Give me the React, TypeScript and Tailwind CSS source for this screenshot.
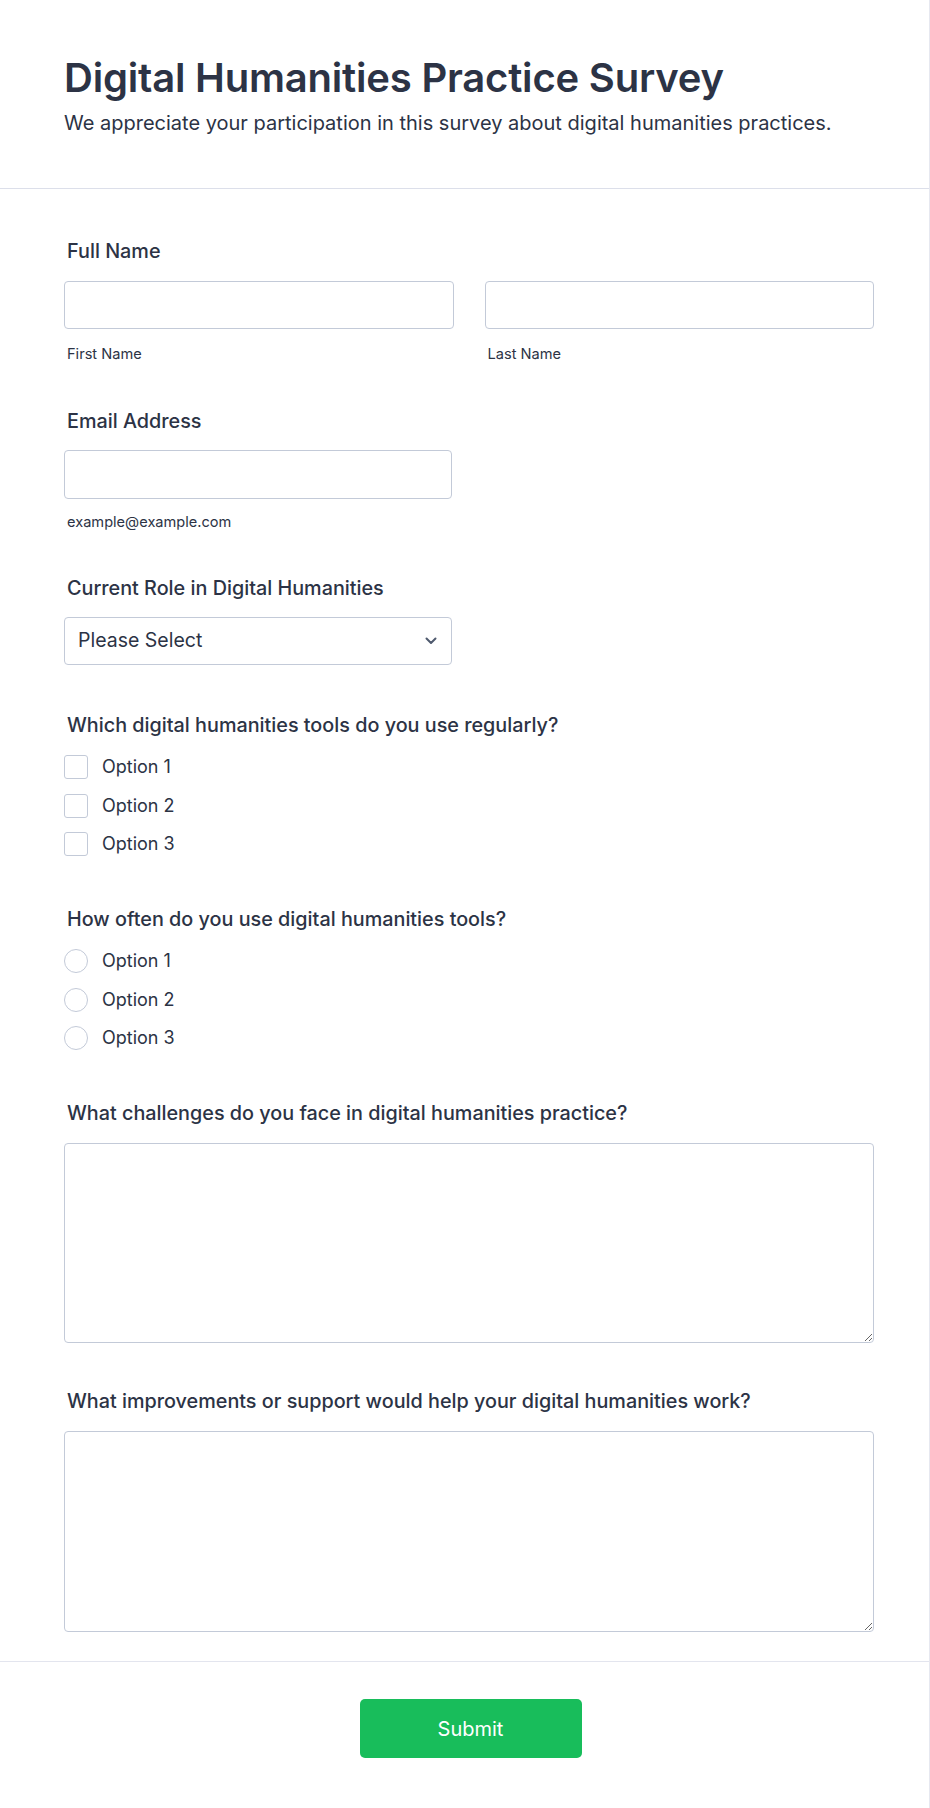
import React, { useState } from 'react';

const FONT = { fontFamily: 'Inter, "Noto Sans", "Liberation Sans", sans-serif' };

const Label: React.FC<{ children: React.ReactNode; className?: string }> = ({ children, className = '' }) => (
  <div className={`text-[19.8px] leading-7 font-medium text-[#2c3345] ${className}`}>{children}</div>
);

const SubLabel: React.FC<{ children: React.ReactNode }> = ({ children }) => (
  <div className="mt-[15px] text-[14.6px] leading-5 text-[#2c3345] pl-[3px]">{children}</div>
);

const App: React.FC = () => {
  const [checked, setChecked] = useState<number[]>([]);
  const [freq, setFreq] = useState<number | null>(null);
  const options = ['Option 1', 'Option 2', 'Option 3'];

  const toggle = (i: number) =>
    setChecked(c => (c.includes(i) ? c.filter(x => x !== i) : [...c, i]));

  return (
    <div style={FONT} className="w-full min-h-[1808px] bg-white text-[#2c3345] border-r border-[#e6e8f0]">
      {/* Header */}
      <div className="pl-16 pr-[55px] pt-[55px] pb-[51px] border-b border-[#dcdfea]">
        <h1 className="text-[40px] leading-[46px] font-semibold tracking-[-0.2px] text-[#2c3345]">
          Digital Humanities Practice Survey
        </h1>
        <p className="mt-[8px] text-xl leading-7 text-[#2c3345]">
          We appreciate your participation in this survey about digital humanities practices.
        </p>
      </div>

      {/* Fields */}
      <div className="pl-16 pr-[55px] pt-12 pb-[29px]">
        {/* Full name */}
        <div>
          <Label className="pl-[3px] mb-[16px]">Full Name</Label>
          <div className="grid grid-cols-2 gap-[31px]">
            <div>
              <input className="w-full h-12 rounded border border-[#c3cad8] bg-white px-3 outline-none" />
              <SubLabel>First Name</SubLabel>
            </div>
            <div>
              <input className="w-full h-12 rounded border border-[#c3cad8] bg-white px-3 outline-none" />
              <SubLabel>Last Name</SubLabel>
            </div>
          </div>
        </div>

        {/* Email */}
        <div className="mt-[43px]">
          <Label className="pl-[3px] mb-[15px]">Email Address</Label>
          <input className="w-[388px] h-[49px] rounded border border-[#c3cad8] bg-white px-3 outline-none" />
          <div className="mt-[13px] text-[14.6px] leading-5 text-[#2c3345] pl-[3px]">example@example.com</div>
        </div>

        {/* Role */}
        <div className="mt-[42px]">
          <Label className="pl-[3px] mb-[15px]">Current Role in Digital Humanities</Label>
          <div className="w-[388px] h-12 rounded border border-[#c3cad8] bg-white pl-[13px] pr-[14px] flex items-center justify-between">
            <span className="text-[19.5px] text-[#2c3345]">Please Select</span>
            <svg width="12" height="8" viewBox="0 0 12 8" fill="none">
              <path d="M1.5 1.5 6 6l4.5-4.5" stroke="#4f5a6e" strokeWidth="2" strokeLinecap="round" strokeLinejoin="round" />
            </svg>
          </div>
        </div>

        {/* Checkboxes */}
        <div className="mt-[46px]">
          <Label className="pl-[3px] mb-[16px]">Which digital humanities tools do you use regularly?</Label>
          <div className="flex flex-col gap-[14.5px]">
            {options.map((o, i) => (
              <label key={o} className="flex items-center h-6 gap-[14px] cursor-pointer" onClick={() => toggle(i)}>
                <span
                  className={`w-6 h-6 rounded-[3px] border ${checked.includes(i) ? 'border-[#18bd5b] bg-[#18bd5b]' : 'border-[#c3cad8] bg-white'}`}
                />
                <span className="text-lg leading-6 text-[#2c3345]">{o}</span>
              </label>
            ))}
          </div>
        </div>

        {/* Radios */}
        <div className="mt-[49px]">
          <Label className="pl-[3px] mb-[16px]">How often do you use digital humanities tools?</Label>
          <div className="flex flex-col gap-[14.5px]">
            {options.map((o, i) => (
              <label key={o} className="flex items-center h-6 gap-[14px] cursor-pointer" onClick={() => setFreq(i)}>
                <span
                  className={`w-6 h-6 rounded-full border ${freq === i ? 'border-[6px] border-[#18bd5b]' : 'border-[#c3cad8]'} bg-white`}
                />
                <span className="text-lg leading-6 text-[#2c3345]">{o}</span>
              </label>
            ))}
          </div>
        </div>

        {/* Challenges */}
        <div className="mt-[49px]">
          <Label className="pl-[3px] mb-[16px]">What challenges do you face in digital humanities practice?</Label>
          <textarea className="block w-full h-[200px] rounded border border-[#c3cad8] bg-white p-3 outline-none" />
        </div>

        {/* Improvements */}
        <div className="mt-[44px]">
          <Label className="pl-[3px] mb-[16px]">What improvements or support would help your digital humanities work?</Label>
          <textarea className="block w-full h-[201px] rounded border border-[#c3cad8] bg-white p-3 outline-none" />
        </div>
      </div>

      {/* Footer */}
      <div className="border-t border-[#e3e5ee] pt-[37px] pb-[50px] pl-[66px] pr-[54px] flex justify-center">
        <button className="w-[222px] h-[59px] rounded-[5px] bg-[#18bd5b] text-white text-xl font-normal">
          Submit
        </button>
      </div>
    </div>
  );
};

export default App;
